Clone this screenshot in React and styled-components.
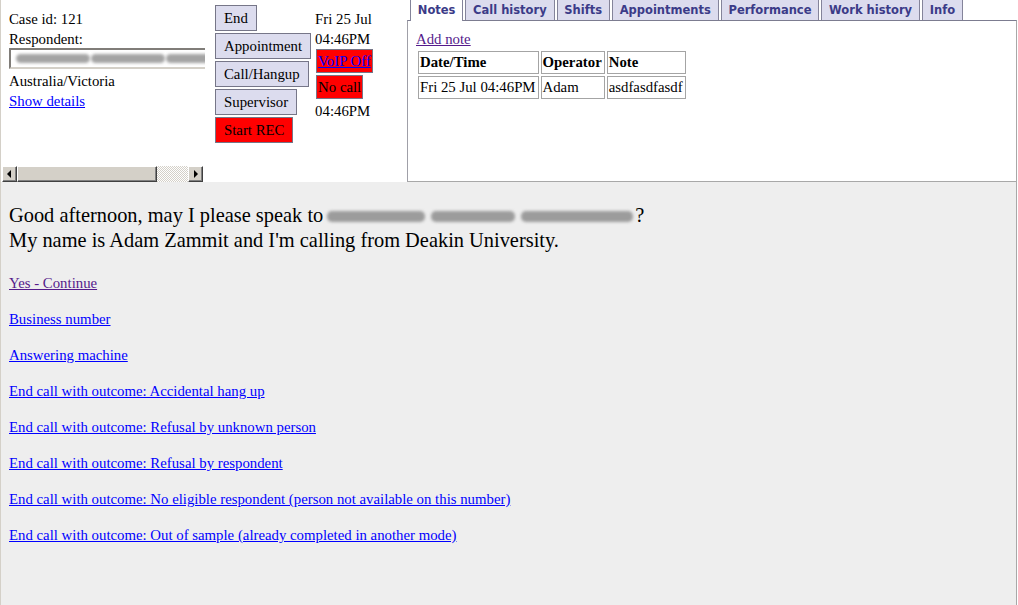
import React from "react";
import styled, { createGlobalStyle } from "styled-components";

const GlobalStyle = createGlobalStyle`
  html, body { margin: 0; padding: 0; background: #ffffff; }
  body { font-family: "Liberation Serif", "Times New Roman", serif; }
  * { box-sizing: border-box; }
`;

const Page = styled.div`
  width: 1017px;
  height: 605px;
  display: flex;
  flex-direction: column;
  border-left: 1px solid #d4d0c8;
  overflow: hidden;
  font-family: "Liberation Serif", "Times New Roman", serif;
  font-size: 14.8px;
  color: #000;
`;

const TopFrame = styled.div`
  height: 182px;
  flex: 0 0 182px;
  display: flex;
  background: #ffffff;
`;

/* ---------- case info pane ---------- */
const InfoPane = styled.div`
  width: 204px;
  flex: 0 0 204px;
  display: flex;
  flex-direction: column;
  justify-content: space-between;
  overflow: hidden;
`;

const InfoBody = styled.div`
  padding: 9px 0 0 8px;
  line-height: 20px;
  white-space: nowrap;
`;

const InfoLine = styled.div`
  height: 20px;
`;

const NameField = styled.div`
  width: 230px;
  height: 21px;
  margin: -1px 0 2px 0;
  border: 2px inset #d4d0c8;
  background: #fff;
  display: flex;
  align-items: center;
  padding-left: 5px;
  gap: 1px;
`;

const Blur = styled.span`
  display: inline-block;
  width: ${(p) => p.$w}px;
  height: ${(p) => p.$h || 9}px;
  background: ${(p) => p.$c || "#9c9c9c"};
  border-radius: 5px;
  filter: blur(1.4px);
  vertical-align: middle;
`;

const TextLink = styled.a`
  color: ${(p) => (p.$visited ? "#551a8b" : "#0000ff")};
  text-decoration: underline;
  cursor: pointer;
`;

const ScrollBar = styled.div`
  display: flex;
  width: 201px;
  height: 16px;
  margin: 0 0 0 1px;
`;

const ScrollButton = styled.div`
  width: 15px;
  height: 16px;
  background: #d4d0c8;
  border-top: 1px solid #ffffff;
  border-left: 1px solid #ffffff;
  border-right: 1px solid #404040;
  border-bottom: 1px solid #404040;
  box-shadow: inset -1px -1px 0 #808080;
  display: flex;
  align-items: center;
  justify-content: center;
`;

const Arrow = styled.span`
  width: 0;
  height: 0;
  border-top: 4px solid transparent;
  border-bottom: 4px solid transparent;
  ${(p) =>
    p.$dir === "left"
      ? "border-right: 4px solid #000; margin-right: 1px;"
      : "border-left: 4px solid #000; margin-left: 1px;"}
`;

const ScrollThumb = styled(ScrollButton)`
  width: 140px;
`;

const ScrollTrack = styled.div`
  flex: 1;
  height: 16px;
  background-color: #ffffff;
  background-image: conic-gradient(#d4d0c8 25%, #ffffff 0 50%, #d4d0c8 0 75%, #ffffff 0);
  background-size: 2px 2px;
`;

/* ---------- controls ---------- */
const ButtonStack = styled.div`
  margin-left: 10px;
  padding-top: 5px;
  display: flex;
  flex-direction: column;
  align-items: flex-start;
  gap: 2px;
`;

const ActionButton = styled.div`
  height: 26px;
  line-height: 24px;
  padding: 0 8px;
  border: 1px solid #767688;
  background: ${(p) => (p.$alert ? "#ff0000" : "#dcdcee")};
  color: #000;
  white-space: nowrap;
`;

const StatusColumn = styled.div`
  margin-left: 4px;
  padding-top: 9px;
  display: flex;
  flex-direction: column;
  align-items: flex-start;
  line-height: 20px;
  white-space: nowrap;
`;

const StatusBadge = styled.div`
  height: ${(p) => p.$h}px;
  line-height: ${(p) => p.$h - 2}px;
  margin: ${(p) => p.$m};
  padding: 0 1px;
  background: #ff0000;
  border: 1px solid #767688;
`;

/* ---------- tabs ---------- */
const TabsPane = styled.div`
  width: 610px;
  margin-left: auto;
  display: flex;
  flex-direction: column;
`;

const TabRow = styled.div`
  display: flex;
  gap: 2px;
  padding-left: 3px;
  height: 20px;
  position: relative;
  z-index: 1;
`;

const Tab = styled.div`
  height: ${(p) => (p.$active ? 21 : 20)}px;
  line-height: 21px;
  padding: 0 6.8px;
  border-left: 1px solid #84849a;
  border-right: 1px solid #84849a;
  background: ${(p) => (p.$active ? "#ffffff" : "#dcdcee")};
  color: #3b3b88;
  font-family: "DejaVu Sans", Verdana, sans-serif;
  font-weight: bold;
  font-size: 11.5px;
  white-space: nowrap;
`;

const TabPanel = styled.div`
  flex: 1;
  border-top: 1px solid #7c7c90;
  border-left: 1px solid #a0a0a8;
  border-right: 1px solid #a8a8a8;
  border-bottom: 1px solid #a8a8a8;
  padding: 8px 0 0 8px;
  line-height: 20px;
`;

const NotesTable = styled.table`
  border-spacing: 2px;
  margin: 0;
  font-size: 14.8px;
`;

const Cell = styled.td`
  border: 1px solid #a4a4a4;
  padding: 1px 2px 1px 1px;
  height: 23px;
  line-height: 19px;
  white-space: nowrap;
  text-align: left;
  font-weight: ${(p) => (p.$head ? "bold" : "normal")};
`;

/* ---------- script ---------- */
const ScriptArea = styled.div`
  flex: 1;
  background: #eeeeee;
  border-right: 1px solid #a8a8a8;
  padding: 21px 0 0 8px;
`;

const Greeting = styled.div`
  font-size: 20.4px;
  line-height: 25px;
  white-space: nowrap;
`;

const Redact = styled.span`
  display: inline-flex;
  align-items: center;
  gap: ${(p) => p.$gap || 0}px;
  vertical-align: 0px;
  margin: 0 2px 0 4px;
`;

const OutcomeList = styled.div`
  margin-top: 22px;
  display: flex;
  flex-direction: column;
  gap: 19px;
  line-height: 17px;
  align-items: flex-start;
`;

const outcomes = [
  "Business number",
  "Answering machine",
  "End call with outcome: Accidental hang up",
  "End call with outcome: Refusal by unknown person",
  "End call with outcome: Refusal by respondent",
  "End call with outcome: No eligible respondent (person not available on this number)",
  "End call with outcome: Out of sample (already completed in another mode)",
];

const tabs = ["Notes", "Call history", "Shifts", "Appointments", "Performance", "Work history", "Info"];

export default function App() {
  return (
    <>
      <GlobalStyle />
      <Page>
        <TopFrame>
          <InfoPane>
            <InfoBody>
              <InfoLine>Case id: 121</InfoLine>
              <InfoLine>Respondent:</InfoLine>
              <NameField>
                <Blur $w={74} $h={9} $c="#a4a4a4" />
                <Blur $w={74} $h={9} $c="#a4a4a4" />
                <Blur $w={64} $h={9} $c="#a4a4a4" />
              </NameField>
              <InfoLine>Australia/Victoria</InfoLine>
              <InfoLine>
                <TextLink href="#">Show details</TextLink>
              </InfoLine>
            </InfoBody>
            <ScrollBar>
              <ScrollButton>
                <Arrow $dir="left" />
              </ScrollButton>
              <ScrollThumb />
              <ScrollTrack />
              <ScrollButton>
                <Arrow $dir="right" />
              </ScrollButton>
            </ScrollBar>
          </InfoPane>

          <ButtonStack>
            <ActionButton>End</ActionButton>
            <ActionButton>Appointment</ActionButton>
            <ActionButton>Call/Hangup</ActionButton>
            <ActionButton>Supervisor</ActionButton>
            <ActionButton $alert>Start REC</ActionButton>
          </ButtonStack>

          <StatusColumn>
            <div>Fri 25 Jul</div>
            <div>04:46PM</div>
            <StatusBadge $h={24} $m="0 0 0 1px">
              <TextLink href="#">VoIP Off</TextLink>
            </StatusBadge>
            <StatusBadge $h={24} $m="2px 0 2px 1px">No call</StatusBadge>
            <div>04:46PM</div>
          </StatusColumn>

          <TabsPane>
            <TabRow>
              {tabs.map((t, i) => (
                <Tab key={t} $active={i === 0}>
                  {t}
                </Tab>
              ))}
            </TabRow>
            <TabPanel>
              <TextLink href="#" $visited>
                Add note
              </TextLink>
              <NotesTable>
                <tbody>
                  <tr>
                    <Cell $head>Date/Time</Cell>
                    <Cell $head>Operator</Cell>
                    <Cell $head>Note</Cell>
                  </tr>
                  <tr>
                    <Cell>Fri 25 Jul 04:46PM</Cell>
                    <Cell>Adam</Cell>
                    <Cell>asdfasdfasdf</Cell>
                  </tr>
                </tbody>
              </NotesTable>
            </TabPanel>
          </TabsPane>
        </TopFrame>

        <ScriptArea>
          <Greeting>
            Good afternoon, may I please speak to
            <Redact $gap={6}>
              <Blur $w={98} $h={11} />
              <Blur $w={84} $h={11} />
              <Blur $w={112} $h={11} />
            </Redact>
            ?
            <br />
            My name is Adam Zammit and I'm calling from Deakin University.
          </Greeting>
          <OutcomeList>
            <TextLink href="#" $visited>
              Yes - Continue
            </TextLink>
            {outcomes.map((o) => (
              <TextLink key={o} href="#">
                {o}
              </TextLink>
            ))}
          </OutcomeList>
        </ScriptArea>
      </Page>
    </>
  );
}
